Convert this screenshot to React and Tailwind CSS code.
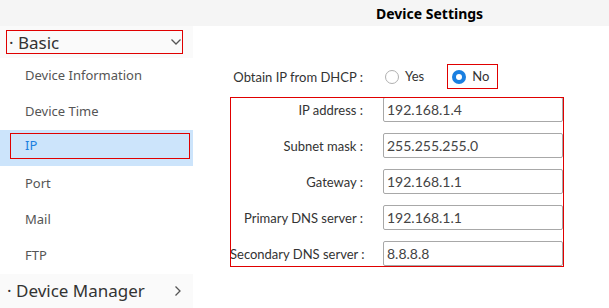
import React from 'react';

const menu = ['Device Information', 'Device Time', 'IP', 'Port', 'Mail', 'FTP'];

const fields = [
    { label: 'IP address', value: '192.168.1.4' },
    { label: 'Subnet mask', value: '255.255.255.0' },
    { label: 'Gateway', value: '192.168.1.1' },
    { label: 'Primary DNS server', value: '192.168.1.1' },
    { label: 'Secondary DNS server', value: '8.8.8.8' },
];

function ChevronDown() {
    return (
        <svg width="10" height="6" viewBox="0 0 10 6" className="text-[#555]">
            <path d="M0.5 0.5 L5 5 L9.5 0.5" fill="none" stroke="currentColor" strokeWidth="1.3" />
        </svg>
    );
}

function ChevronRight() {
    return (
        <svg width="6" height="10" viewBox="0 0 6 10" className="text-[#555]">
            <path d="M0.5 0.5 L5 5 L0.5 9.5" fill="none" stroke="currentColor" strokeWidth="1.3" />
        </svg>
    );
}

export default function App() {
    return (
        <div
            className="w-[609px] h-[308px] overflow-hidden bg-white flex flex-col text-[13px] text-[#333]"
            style={{ fontFamily: '"Noto Sans", "Open Sans", "Noto Sans CJK SC", sans-serif' }}
        >
            {/* Header */}
            <div className="h-[26px] shrink-0 bg-[#f5f5f5] flex items-center pl-[376px]">
                <span className="font-bold text-[14px] text-black">Device Settings</span>
            </div>

            <div className="flex flex-1 min-h-0">
                {/* Sidebar */}
                <div className="w-[193px] shrink-0 flex flex-col">
                    <div className="h-[32px] bg-[#fafafa] pt-[4px] pl-[6px] pr-[10px]">
                        <div className="h-[24px] border border-[#e00000] flex items-center justify-between pl-[2px] pr-[1px]">
                            <span className="text-[17px] text-[#333] leading-none">· Basic</span>
                            <ChevronDown />
                        </div>
                    </div>
                    {menu.map((item) =>
                        item === 'IP' ? (
                            <div key={item} className="h-[36px] bg-[#cce4fb] pt-[3px] pb-[7px] pl-[10px] pr-[3px]">
                                <div className="h-full border border-[#e00000] flex items-center pl-[14px] text-[#1a7fe0]">
                                    IP
                                </div>
                            </div>
                        ) : (
                            <div key={item} className="h-[36px] flex items-center pl-[25px] text-[#555]">
                                {item}
                            </div>
                        )
                    )}
                    <div className="h-[34px] bg-[#fafafa] flex items-center justify-between pl-[7px] pr-[12px]">
                        <span className="text-[17px] text-[#333]">· Device Manager</span>
                        <ChevronRight />
                    </div>
                </div>

                {/* Content */}
                <div
                    className="flex-1 pl-[37px] pt-[38px] text-[13px]"
                    style={{ fontFamily: 'Lato, "Noto Sans", sans-serif' }}
                >
                    <div className="flex items-center h-[25px]">
                        <div className="w-[134px] text-right pr-[1px] pt-[3px] whitespace-nowrap">Obtain IP from DHCP :</div>
                        <div className="flex items-center ml-[21px] gap-[6px]">
                            <span className="w-[14px] h-[14px] rounded-full border border-[#b0b0b0] bg-white"></span>
                            <span>Yes</span>
                        </div>
                        <div className="ml-[23px] h-[25px] border border-[#e00000] flex items-center gap-[6px] pl-[4px] pr-[8px]">
                            <span className="w-[14px] h-[14px] rounded-full bg-[#1a7fe0] flex items-center justify-center">
                                <span className="w-[6px] h-[6px] rounded-full bg-white"></span>
                            </span>
                            <span>No</span>
                        </div>
                    </div>

                    <div className="relative mt-[8px] w-[334px] h-[170px] overflow-hidden">
                        <div className="flex flex-col gap-[11px]">
                            {fields.map((f) => (
                                <div key={f.label} className="flex items-center h-[25px]">
                                    <div className="w-[133px] text-right whitespace-nowrap text-[#333] pt-[2px]">
                                        {f.label} :
                                    </div>
                                    <div className="ml-[20px] w-[180px] h-[25px] border border-[#a8a8a8] rounded-[2px] flex items-center pl-[3px] text-[#444] text-[14px]">
                                        {f.value}
                                    </div>
                                </div>
                            ))}
                        </div>
                        <div className="absolute inset-0 border border-[#e00000] pointer-events-none"></div>
                    </div>
                </div>
            </div>
        </div>
    );
}
